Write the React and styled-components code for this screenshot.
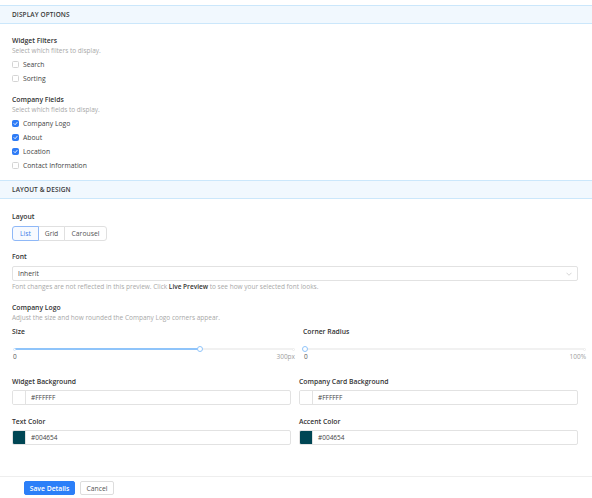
import React, { useState } from "react";
import styled, { createGlobalStyle } from "styled-components";

const GlobalStyle = createGlobalStyle`
  html, body {
    margin: 0;
    padding: 0;
    background: #ffffff;
    font-family: "Open Sans", "Liberation Sans", sans-serif;
    color: #333333;
  }
  * { box-sizing: border-box; }
`;

const Page = styled.div`
  width: 592px;
  height: 498px;
  padding-top: 5px;
  overflow: hidden;
`;

const SectionHeader = styled.div`
  height: 19px;
  background: #f1f8fe;
  border-top: 1px solid #cbe7fb;
  border-bottom: 1px solid #cbe7fb;
  padding-left: 12px;
  display: flex;
  align-items: center;
  font-size: 6.5px;
  font-weight: 600;
  letter-spacing: 0.1px;
  text-transform: uppercase;
  color: #3a3a3a;
`;

const SectionBody = styled.div`
  padding: ${(p) => p.$pt}px 14px ${(p) => p.$pb}px 12px;
`;

const Title = styled.div`
  font-size: 6.8px;
  line-height: 10px;
  font-weight: 600;
  color: #333333;
  margin-top: ${(p) => p.$mt || 0}px;
`;

const Hint = styled.div`
  font-size: 6.5px;
  line-height: 10px;
  color: #a8a8a8;
  margin-top: ${(p) => p.$mt || 0}px;
  b {
    font-weight: 600;
    color: #333333;
  }
`;

const CheckList = styled.div`
  display: flex;
  flex-direction: column;
  margin-top: 1px;
`;

const CheckRow = styled.label`
  height: 14px;
  display: flex;
  align-items: center;
  gap: 4px;
  font-size: 6.8px;
  color: #444444;
  cursor: pointer;
`;

const Box = styled.span`
  width: 7px;
  height: 7px;
  border-radius: 1.5px;
  border: 1px solid ${(p) => (p.$on ? "#2f7cf6" : "#d4d4d4")};
  background: ${(p) => (p.$on ? "#2f7cf6" : "#ffffff")};
  display: flex;
  align-items: center;
  justify-content: center;
`;

const Segmented = styled.div`
  display: flex;
  margin-top: 4px;
  height: 15px;
`;

const Segment = styled.button`
  position: relative;
  z-index: ${(p) => (p.$active ? 1 : 0)};
  font-family: inherit;
  font-size: 6.8px;
  height: 15px;
  padding: 0;
  width: ${(p) => p.$w}px;
  margin-left: ${(p) => (p.$first ? 0 : -1)}px;
  border: 1px solid ${(p) => (p.$active ? "#8fb8f7" : "#e0e0e0")};
  border-radius: ${(p) => (p.$first ? "3px 0 0 3px" : p.$last ? "0 3px 3px 0" : "0")};
  background: ${(p) => (p.$active ? "#f7faff" : "#ffffff")};
  color: ${(p) => (p.$active ? "#3f7ee8" : "#555555")};
  cursor: pointer;
`;

const Select = styled.div`
  margin-top: 4px;
  height: 15px;
  border: 1px solid #e2e2e2;
  border-radius: 2px;
  display: flex;
  align-items: center;
  justify-content: space-between;
  padding: 0 5px;
  font-size: 6.8px;
  color: #444444;
  svg { display: block; }
`;

const TwoCols = styled.div`
  display: grid;
  grid-template-columns: 1fr 1fr;
  column-gap: 8px;
  margin-top: ${(p) => p.$mt || 0}px;
  margin-right: ${(p) => p.$mr || 0}px;
`;

const SliderWrap = styled.div`
  margin-top: 7px;
`;

const Track = styled.div`
  position: relative;
  height: 10px;
  margin: 0 2px;
  &::before {
    content: "";
    position: absolute;
    left: 0;
    right: 0;
    top: 4px;
    height: 2px;
    border-radius: 1px;
    background: #f1f1f1;
  }
`;

const Fill = styled.div`
  position: absolute;
  left: 0;
  top: 4px;
  height: 2px;
  border-radius: 1px;
  background: #8fc4fa;
`;

const Dot = styled.span`
  position: absolute;
  top: 5px;
  width: ${(p) => p.$size}px;
  height: ${(p) => p.$size}px;
  margin-left: ${(p) => -p.$size / 2}px;
  margin-top: ${(p) => -p.$size / 2}px;
  border-radius: 50%;
  background: #ffffff;
  border: 1px solid ${(p) => p.$color};
`;

const Ticks = styled.div`
  display: flex;
  justify-content: space-between;
  margin-top: -1px;
  font-size: 6.5px;
  line-height: 8px;
  color: #a0a0a0;
  span:first-child { color: #555555; padding-left: 1px; }
`;

const ColorField = styled.div`
  margin-top: 3px;
  height: 15px;
  border: 1px solid #e2e2e2;
  border-radius: 2px;
  display: flex;
  align-items: stretch;
  overflow: hidden;
`;

const Swatch = styled.span`
  width: 13px;
  background: ${(p) => p.$color};
  border-right: 1px solid #e2e2e2;
`;

const ColorValue = styled.span`
  display: flex;
  align-items: center;
  padding-left: 5px;
  font-size: 6.5px;
  color: #444444;
`;

const Footer = styled.div`
  margin-top: 31px;
  border-top: 1px solid #eeeeee;
  padding: 4px 0 0 24px;
  display: flex;
  gap: 5px;
`;

const Button = styled.button`
  font-family: inherit;
  font-size: 6.8px;
  font-weight: ${(p) => (p.$primary ? 600 : 400)};
  height: 14px;
  width: ${(p) => p.$w}px;
  padding: 0;
  border-radius: 2px;
  border: 1px solid ${(p) => (p.$primary ? "#2c7ff8" : "#dddddd")};
  background: ${(p) => (p.$primary ? "#2c7ff8" : "#ffffff")};
  color: ${(p) => (p.$primary ? "#ffffff" : "#555555")};
  cursor: pointer;
`;

function Check({ label, on, onToggle }) {
  return (
    <CheckRow onClick={onToggle}>
      <Box $on={on}>
        {on && (
          <svg width="5" height="5" viewBox="0 0 10 10">
            <path d="M2 5.2 L4.2 7.4 L8.2 2.8" fill="none" stroke="#fff" strokeWidth="1.8" strokeLinecap="round" strokeLinejoin="round" />
          </svg>
        )}
      </Box>
      {label}
    </CheckRow>
  );
}

function Slider({ label, value, max, unit }) {
  const pct = (value / max) * 100;
  return (
    <div>
      <Title>{label}</Title>
      <SliderWrap>
        <Track>
          <Fill style={{ width: pct + "%" }} />
          {pct > 0 && <Dot $size={3} $color="#cfe5fc" style={{ left: "0%" }} />}
          <Dot $size={3} $color="#ececec" style={{ left: "100%" }} />
          <Dot $size={6.5} $color="#8fc4fa" style={{ left: pct + "%" }} />
        </Track>
        <Ticks>
          <span>0</span>
          <span>
            {max}
            {unit}
          </span>
        </Ticks>
      </SliderWrap>
    </div>
  );
}

function ColorInput({ label, color }) {
  return (
    <div>
      <Title>{label}</Title>
      <ColorField>
        <Swatch $color={color} />
        <ColorValue>{color}</ColorValue>
      </ColorField>
    </div>
  );
}

export default function App() {
  const [filters, setFilters] = useState({ Search: false, Sorting: false });
  const [fields, setFields] = useState({
    "Company Logo": true,
    About: true,
    Location: true,
    "Contact Information": false,
  });
  const [layout, setLayout] = useState("List");

  const layouts = [
    { name: "List", w: 27 },
    { name: "Grid", w: 27 },
    { name: "Carousel", w: 43 },
  ];

  return (
    <Page>
      <GlobalStyle />
      <SectionHeader>Display Options</SectionHeader>
      <SectionBody $pt={12} $pb={8}>
        <Title>Widget Filters</Title>
        <Hint>Select which filters to display.</Hint>
        <CheckList>
          {Object.keys(filters).map((k) => (
            <Check key={k} label={k} on={filters[k]} onToggle={() => setFilters({ ...filters, [k]: !filters[k] })} />
          ))}
        </CheckList>
        <Title $mt={10}>Company Fields</Title>
        <Hint>Select which fields to display.</Hint>
        <CheckList>
          {Object.keys(fields).map((k) => (
            <Check key={k} label={k} on={fields[k]} onToggle={() => setFields({ ...fields, [k]: !fields[k] })} />
          ))}
        </CheckList>
      </SectionBody>

      <SectionHeader>Layout &amp; Design</SectionHeader>
      <SectionBody $pt={13} $pb={0}>
        <Title>Layout</Title>
        <Segmented>
          {layouts.map((l, i) => (
            <Segment
              key={l.name}
              $w={l.w}
              $first={i === 0}
              $last={i === layouts.length - 1}
              $active={layout === l.name}
              onClick={() => setLayout(l.name)}
            >
              {l.name}
            </Segment>
          ))}
        </Segmented>

        <Title $mt={11}>Font</Title>
        <Select>
          <span>Inherit</span>
          <svg width="6" height="4" viewBox="0 0 12 8">
            <path d="M1 1.5 L6 6.5 L11 1.5" fill="none" stroke="#c4c4c4" strokeWidth="1.4" />
          </svg>
        </Select>
        <Hint $mt={1}>
          Font changes are not reflected in this preview. Click <b>Live Preview</b> to see how your selected font looks.
        </Hint>

        <Title $mt={11}>Company Logo</Title>
        <Hint>Adjust the size and how rounded the Company Logo corners appear.</Hint>
        <TwoCols $mt={4} $mr={-8}>
          <Slider label="Size" value={200} max={300} unit="px" />
          <Slider label="Corner Radius" value={0} max={100} unit="%" />
        </TwoCols>

        <TwoCols $mt={16}>
          <ColorInput label="Widget Background" color="#FFFFFF" />
          <ColorInput label="Company Card Background" color="#FFFFFF" />
        </TwoCols>
        <TwoCols $mt={12}>
          <ColorInput label="Text Color" color="#004654" />
          <ColorInput label="Accent Color" color="#004654" />
        </TwoCols>
      </SectionBody>

      <Footer>
        <Button $primary $w={51}>Save Details</Button>
        <Button $w={34}>Cancel</Button>
      </Footer>
    </Page>
  );
}
